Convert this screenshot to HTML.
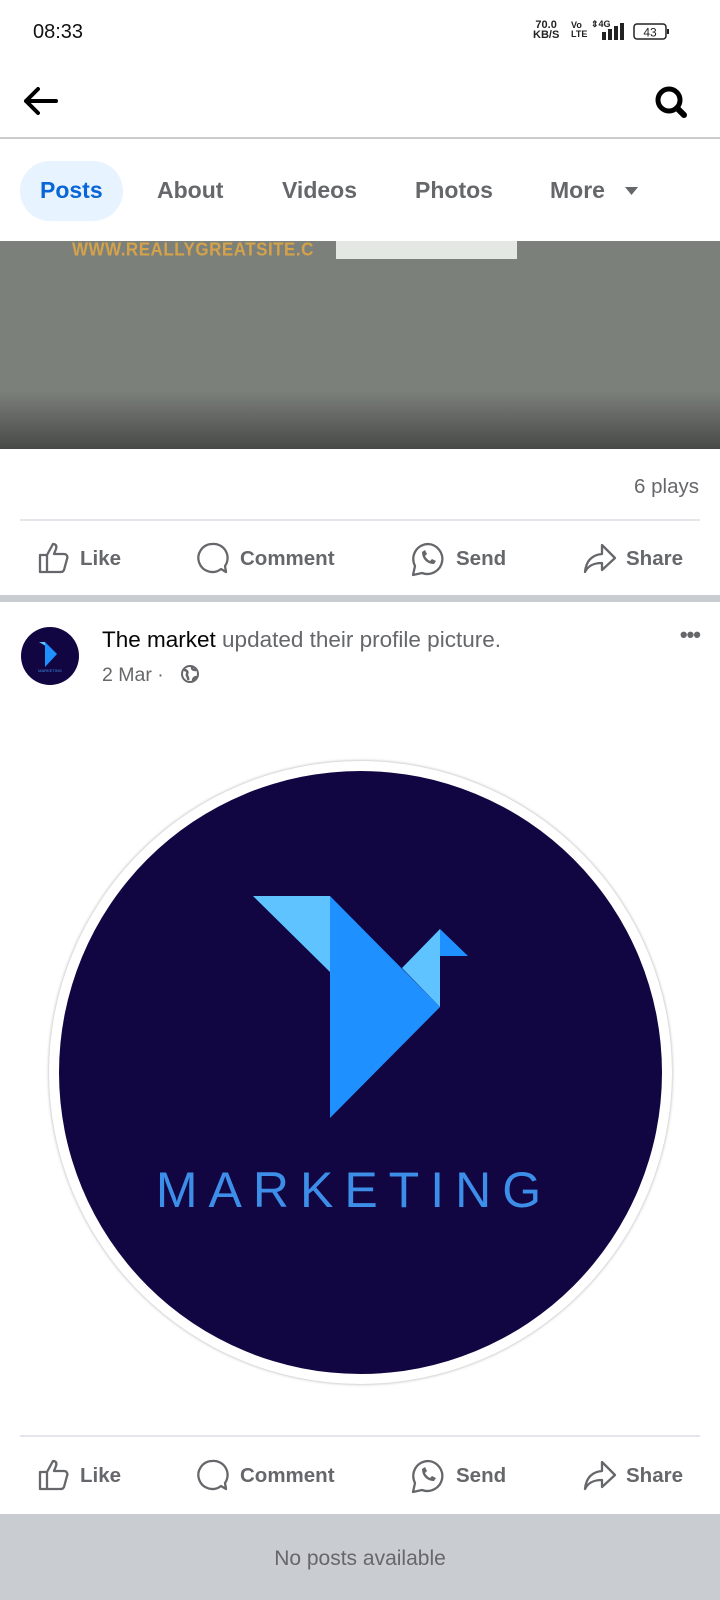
<!DOCTYPE html>
<html><head><meta charset="utf-8"><style>
*{margin:0;padding:0;box-sizing:border-box}
body{width:720px;height:1600px;background:#fff;font-family:"Liberation Sans",sans-serif;position:relative;overflow:hidden;color:#65676b}
.a{position:absolute}
.tab{position:absolute;top:177px;font-size:23px;font-weight:bold;color:#65676b}
.act{position:absolute;font-size:20.5px;font-weight:bold;color:#65676b}
</style></head><body>
<div class="a" style="left:33px;top:21px;font-size:20px;color:#111">08:33</div>
<div class="a" style="left:533px;top:20px;font-size:11px;line-height:10px;color:#222;font-weight:bold;text-align:center">70.0<br>KB/S</div>
<div class="a" style="left:571px;top:21px;font-size:9px;line-height:9px;color:#222;font-weight:bold">Vo<br>LTE</div>
<div class="a" style="left:591px;top:19px;font-size:9px;color:#222;font-weight:bold">⇕4G</div>
<svg class="a" style="left:600px;top:22px" width="28" height="20"><rect x="2" y="10" width="4" height="8" fill="#222"/><rect x="8" y="7" width="4" height="11" fill="#222"/><rect x="14" y="4" width="4" height="14" fill="#222"/><rect x="20" y="1" width="4" height="17" fill="#222"/></svg>
<svg class="a" style="left:633px;top:22px" width="38" height="20"><rect x="1" y="2" width="32" height="15" rx="3" fill="none" stroke="#222" stroke-width="1.5"/><rect x="34" y="7" width="2" height="5" fill="#222"/><text x="17" y="14.5" font-size="12" text-anchor="middle" fill="#222" font-family="Liberation Sans">43</text></svg>
<svg class="a" style="left:20px;top:84px" width="42" height="34"><path d="M36 17H6M18 5L6 17l12 12" stroke="#000" stroke-width="4" fill="none" stroke-linecap="round" stroke-linejoin="round"/></svg>
<svg class="a" style="left:652px;top:84px" width="40" height="38"><circle cx="17" cy="16" r="11" stroke="#000" stroke-width="5" fill="none"/><path d="M25 24l7 7" stroke="#000" stroke-width="6" stroke-linecap="round"/></svg>
<div class="a" style="left:0;top:137px;width:720px;height:2px;background:#ccc"></div>
<div class="a" style="left:20px;top:161px;width:103px;height:60px;border-radius:30px;background:#e7f3ff"></div>
<div class="tab" style="left:40px;color:#0866d6">Posts</div>
<div class="tab" style="left:157px">About</div>
<div class="tab" style="left:282px">Videos</div>
<div class="tab" style="left:415px">Photos</div>
<div class="tab" style="left:550px">More</div>
<svg class="a" style="left:624px;top:185px" width="16" height="12"><path d="M1 2h13L7.5 10z" fill="#65676b"/></svg>
<div class="a" style="left:0;top:241px;width:720px;height:208px;background:linear-gradient(#7c807b 0,#7c807b 150px,#5c5f5b 185px,#484a47 208px)"></div>
<div class="a" style="left:72px;top:240px;font-size:17px;font-weight:bold;color:#d4a24a;letter-spacing:0.5px;transform:scaleY(1.1)">WWW.REALLYGREATSITE.C</div>
<div class="a" style="left:336px;top:241px;width:181px;height:18px;background:#e3e8e2"></div>
<div class="a" style="right:21px;top:475px;font-size:20.5px">6 plays</div>
<div class="a" style="left:20px;top:519px;width:680px;height:2px;background:#e4e6eb"></div>
<div class="a" style="left:0;top:595px;width:720px;height:7px;background:#c9ccd1"></div>
<div class="a" style="left:21px;top:627px;width:58px;height:58px;border-radius:50%;background:#120642"></div>
<svg class="a" style="left:21px;top:627px" width="58" height="58"><path d="M18 15h6l4 6z" fill="#5fc3ff"/><path d="M24 15l12 12-12 13z" fill="#1e90ff"/><text x="29" y="45" font-size="4" fill="#3c8ee8" text-anchor="middle" font-family="Liberation Sans">MARKETING</text></svg>
<div class="a" style="left:102px;top:627px;font-size:22.5px;color:#65676b"><span style="color:#050505">The market</span> updated their profile picture.</div>
<div class="a" style="left:102px;top:664px;font-size:19.5px">2 Mar · </div>
<svg class="a" style="left:180px;top:664px" width="20" height="20"><circle cx="10" cy="10" r="8" fill="none" stroke="#65676b" stroke-width="2"/><path d="M4 6c3 0 4 2 3 4s2 3 1 6M12 3c0 3 2 3 4 3M13 17c0-3 2-4 4-4" stroke="#65676b" stroke-width="2.5" fill="none"/></svg>
<div class="a" style="right:20px;top:622px;font-size:22px;letter-spacing:-1px;color:#65676b;font-weight:bold">•••</div>
<div class="a" style="left:49px;top:761px;width:623px;height:623px;border-radius:50%;background:#fff;box-shadow:0 0 3px rgba(0,0,0,.35)"></div>
<div class="a" style="left:59px;top:771px;width:603px;height:603px;border-radius:50%;background:#120642"></div>
<svg class="a" style="left:0;top:0" width="720" height="1600">
<polygon points="253,896 330,896 330,972" fill="#5fc3ff"/>
<polygon points="330,896 440,1007 330,1118" fill="#1e90ff"/>
<polygon points="402,968 440,929 440,1007" fill="#5fc3ff"/>
<polygon points="440,929 468,956 440,956" fill="#1e90ff"/>
<text x="354" y="1207" font-size="50" fill="#3c8ee8" text-anchor="middle" letter-spacing="11" font-family="Liberation Sans">MARKETING</text>
</svg>
<div class="a" style="left:20px;top:1435px;width:680px;height:2px;background:#e4e6eb"></div>
<div class="a" style="left:0;top:1514px;width:720px;height:86px;background:#c9ccd1"></div>
<div class="a" style="left:0;top:1547px;width:720px;text-align:center;font-size:21px;color:#65676b">No posts available</div>
<script>
var s='<svg class="a" style="left:37px;top:T1px" width="36" height="34"><path d="M3 14h7v17H3zM10 14l6-11c3 0 4 2 3 5l-2 5h10c3 0 4 3 3 5l-3 11c-1 2-2 2-4 2H10" stroke="#65676b" stroke-width="2.3" fill="none" stroke-linejoin="round"/></svg><div class="act" style="left:80px;top:T2px">Like</div>'+
'<svg class="a" style="left:195px;top:T1px" width="36" height="36"><path d="M17 3a14 14 0 1 0 9 25l5 3-1-6A14 14 0 0 0 17 3z" stroke="#65676b" stroke-width="2.3" fill="none" stroke-linejoin="round"/></svg><div class="act" style="left:240px;top:T2px">Comment</div>'+
'<svg class="a" style="left:410px;top:T1px" width="38" height="38"><path d="M18 3a15 15 0 0 0-13 22l-2 9 9-2A15 15 0 1 0 18 3z" stroke="#65676b" stroke-width="2.3" fill="none" stroke-linejoin="round"/><path d="M12 11c0 7 5 12 12 12l2-3-4-2-2 2c-2-1-4-3-5-5l2-2-2-4z" fill="#65676b"/></svg><div class="act" style="left:456px;top:T2px">Send</div>'+
'<svg class="a" style="left:582px;top:T1px" width="36" height="34"><path d="M20 4l13 13-13 12v-7C11 22 6 25 3 31c1-10 6-17 17-18z" stroke="#65676b" stroke-width="2.3" fill="none" stroke-linejoin="round"/></svg><div class="act" style="left:626px;top:T2px">Share</div>';
function put(y){document.body.insertAdjacentHTML('beforeend',s.replace(/T1/g,y-17).replace(/T2/g,y-11));}
put(558);put(1475);
</script>
</body></html>
